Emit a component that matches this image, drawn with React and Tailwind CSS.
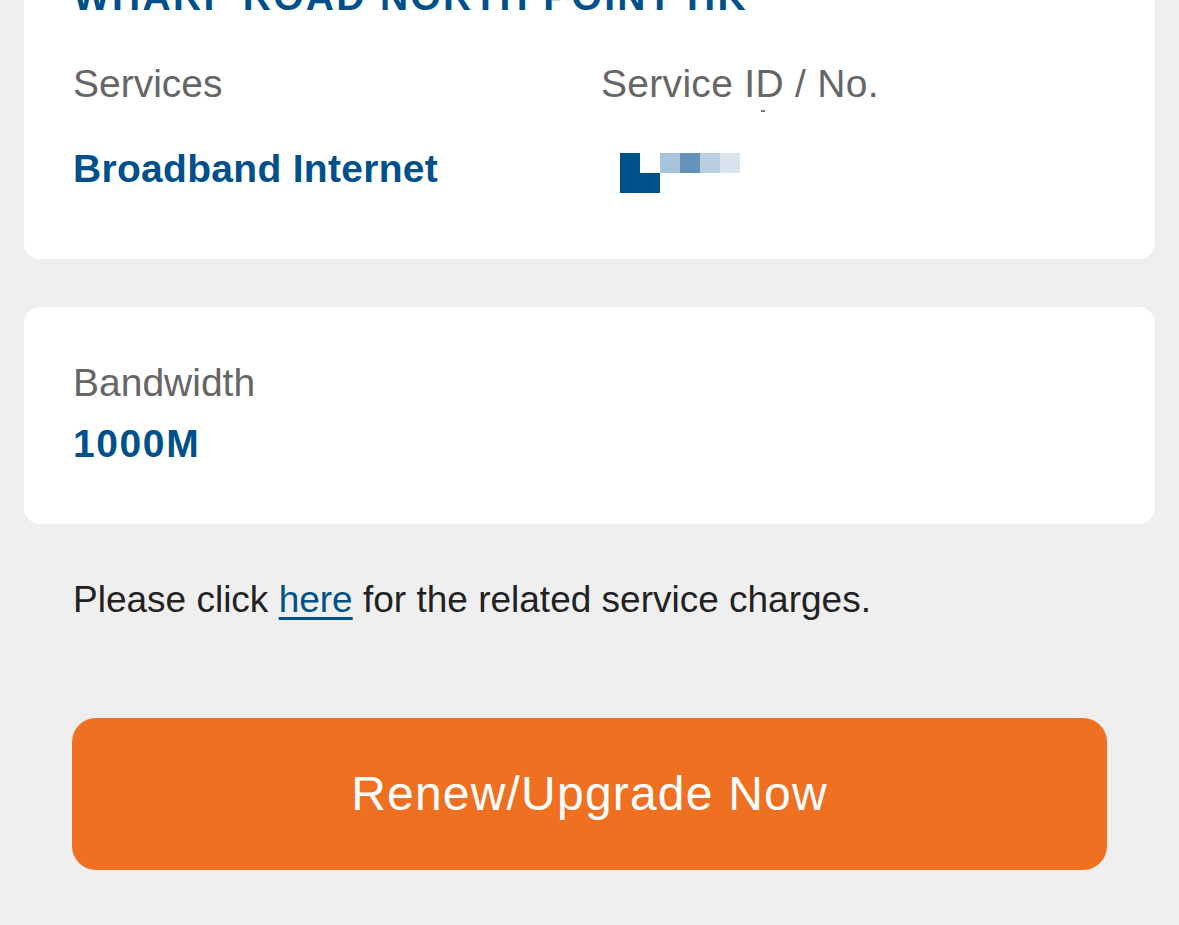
const blue = "text-[#00508c]";

const PixelId = () => (
  <div className="mt-[10px] flex flex-col">
    <div className="flex">
      <div className="w-[20px] h-[20px] bg-[#00508c]" />
      <div className="w-[20px] h-[20px] bg-white" />
      <div className="w-[20px] h-[20px] bg-[#a9c3da]" />
      <div className="w-[20px] h-[20px] bg-[#6393b9]" />
      <div className="w-[20px] h-[20px] bg-[#b9cfe1]" />
      <div className="w-[20px] h-[20px] bg-[#d8e3ed]" />
    </div>
    <div className="flex">
      <div className="w-[40px] h-[20px] bg-[#00508c]" />
    </div>
  </div>
);

const App = () => {
  return (
    <div
      className="min-h-screen bg-[#efefef] px-[24px] overflow-hidden"
      style={{ fontFamily: '"Liberation Sans", Arial, sans-serif' }}
    >
      <div className="-mt-[27px] bg-white rounded-b-[16px] px-[49px] pb-[66px]">
        <h2 className={`text-[39px] leading-[48px] font-bold uppercase tracking-[2.3px] ${blue}`}>
          Wharf Road North Point HK
        </h2>
        <div className="mt-[39px] flex">
          <div className="w-[528px]">
            <p className="text-[39px] leading-[48px] text-[#666666]">Services</p>
            <p className={`mt-[37px] text-[39px] leading-[48px] font-bold tracking-[0.3px] ${blue}`}>
              Broadband Internet
            </p>
          </div>
          <div className="relative">
            <p className="text-[39px] leading-[48px] text-[#666666] tracking-[0.3px]">Service ID / No.</p>
            <div className="absolute left-[160px] top-[50px] w-[4px] h-[2px] bg-[#777]" />
            <div className="mt-[45px] pl-[19px]">
              <PixelId />
            </div>
          </div>
        </div>
      </div>

      <div className="mt-[48px] bg-white rounded-[16px] px-[49px] pt-[52px] pb-[56px]">
        <p className="text-[39px] leading-[48px] text-[#666666]">Bandwidth</p>
        <p className={`mt-[13px] text-[39px] leading-[48px] font-bold tracking-[1.6px] ${blue}`}>1000M</p>
      </div>

      <p className="mt-[54px] px-[49px] text-[37px] leading-[44px] text-[#222222]">
        Please click{" "}
        <a href="#" className={`underline underline-offset-[5px] decoration-[3px] ${blue}`}>
          here
        </a>{" "}
        for the related service charges.
      </p>

      <div className="mt-[96px] px-[48px]">
        <button className="w-full h-[152px] rounded-[24px] bg-[#f07022] text-white text-[48px] leading-none tracking-[1.2px]">
          Renew/Upgrade Now
        </button>
      </div>
    </div>
  );
};

export default App;
